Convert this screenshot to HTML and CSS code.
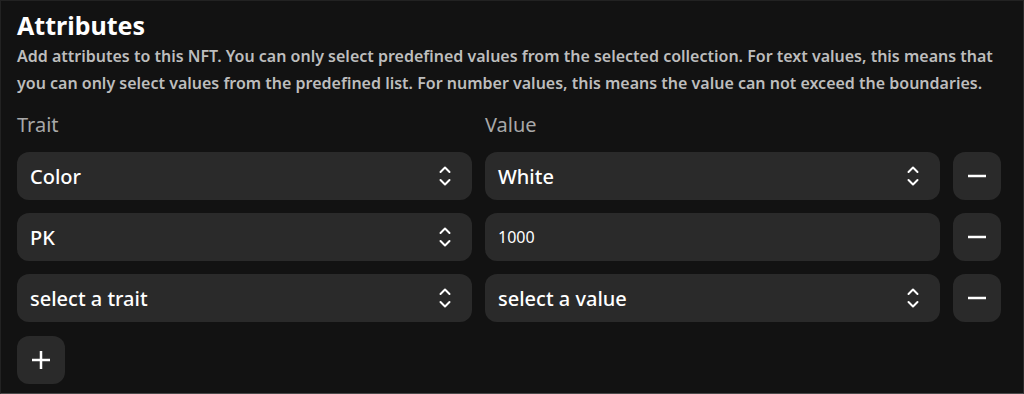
FILE: index.html
```html
<!DOCTYPE html>
<html>
<head>
<meta charset="utf-8">
<link rel="stylesheet" href="styles.css">
</head>
<body>
<section class="panel">
  <h2 class="title">Attributes</h2>
  <p class="desc">Add attributes to this NFT. You can only select predefined values from the selected collection. For text values, this means that you can only select values from the predefined list. For number values, this means the value can not exceed the boundaries.</p>
  <div class="grid">
    <div class="label">Trait</div>
    <div class="label">Value</div>
    <div></div>

    <div class="field select"><span>Color</span><svg class="chev" viewBox="0 0 12 22"><path d="M1.5 7l4.5-4.5 4.5 4.5M1.5 15l4.5 4.5 4.5-4.5"/></svg></div>
    <div class="field select"><span>White</span><svg class="chev" viewBox="0 0 12 22"><path d="M1.5 7l4.5-4.5 4.5 4.5M1.5 15l4.5 4.5 4.5-4.5"/></svg></div>
    <button class="btn"><svg viewBox="0 0 20 20"><path d="M1 10h18"/></svg></button>

    <div class="field select"><span>PK</span><svg class="chev" viewBox="0 0 12 22"><path d="M1.5 7l4.5-4.5 4.5 4.5M1.5 15l4.5 4.5 4.5-4.5"/></svg></div>
    <div class="field input"><span>1000</span></div>
    <button class="btn"><svg viewBox="0 0 20 20"><path d="M1 10h18"/></svg></button>

    <div class="field select"><span>select a trait</span><svg class="chev" viewBox="0 0 12 22"><path d="M1.5 7l4.5-4.5 4.5 4.5M1.5 15l4.5 4.5 4.5-4.5"/></svg></div>
    <div class="field select"><span>select a value</span><svg class="chev" viewBox="0 0 12 22"><path d="M1.5 7l4.5-4.5 4.5 4.5M1.5 15l4.5 4.5 4.5-4.5"/></svg></div>
    <button class="btn"><svg viewBox="0 0 20 20"><path d="M1 10h18"/></svg></button>

    <button class="btn add"><svg viewBox="0 0 20 20"><path d="M10 1v18M1 10h18"/></svg></button>
  </div>
</section>
</body>
</html>
```
FILE: styles.css
```css
html, body {
  margin: 0;
  padding: 0;
  background: #121212;
}
body {
  font-family: "Noto Sans", "Open Sans", sans-serif;
  color: #fff;
}
.panel {
  box-sizing: border-box;
  width: 1024px;
  height: 394px;
  border: 1px solid #222;
  border-bottom-color: #4a4a4a;
  border-right-color: #2a2a2a;
  padding: 6px 22px 0 16px;
  background: #121212;
}
.title {
  margin: 0;
  font-size: 25px;
  font-weight: 700;
  line-height: 36px;
  color: #fff;
}
.desc {
  margin: 0;
  font-size: 16px;
  font-weight: 600;
  line-height: 27px;
  color: #bdbdbd;
}
.grid {
  display: grid;
  grid-template-columns: 1fr 1fr 48px;
  column-gap: 13px;
  row-gap: 13px;
  margin-top: 14px;
}
.label {
  font-size: 20px;
  color: #a8a8a8;
  line-height: 28px;
  margin-bottom: 0;
}
.field {
  height: 48px;
  border-radius: 12px;
  background: #2a2a2a;
  display: flex;
  align-items: center;
  justify-content: space-between;
  padding: 0 21px 0 13px;
  font-size: 20px;
  font-weight: 500;
}
.field.input {
  font-size: 16px;
  font-weight: 400;
}
.chev {
  width: 12px;
  height: 22px;
  fill: none;
  stroke: #fff;
  stroke-width: 2;
  stroke-linecap: round;
  stroke-linejoin: round;
}
.btn {
  width: 48px;
  height: 48px;
  border: none;
  border-radius: 12px;
  background: #2a2a2a;
  display: flex;
  align-items: center;
  justify-content: center;
  padding: 0;
}
.btn svg {
  width: 20px;
  height: 20px;
  fill: none;
  stroke: #fff;
  stroke-width: 2.5;
}
.add {
  grid-column: 1;
  margin-top: 1px;
}
```
